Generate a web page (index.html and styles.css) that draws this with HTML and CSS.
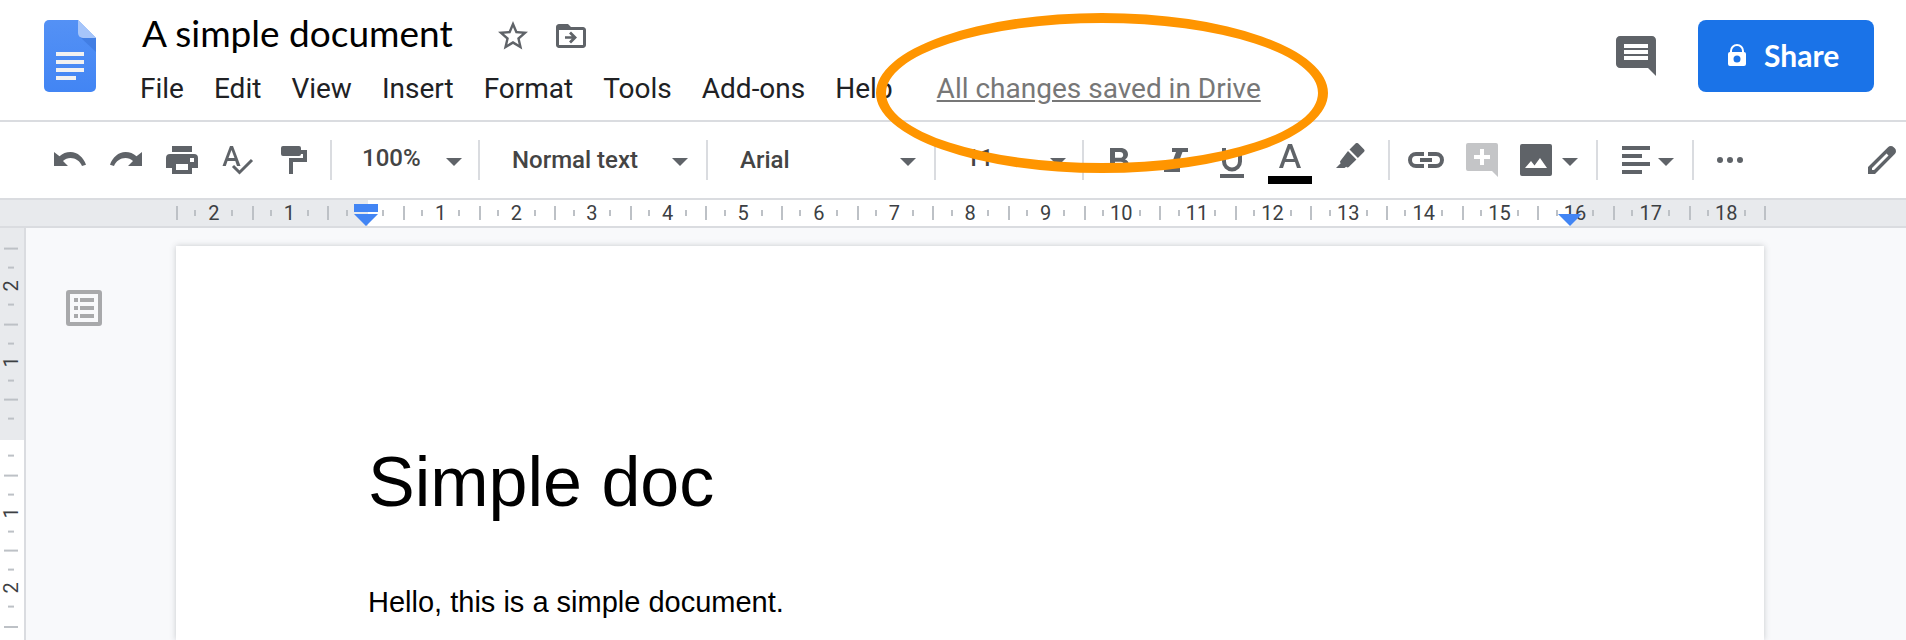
FILE: index.html
```html
<!DOCTYPE html>
<html lang="en">
  <head>
    <meta charset="UTF-8" />
    <meta name="viewport" content="width=device-width, initial-scale=1.0" />
    <title>A simple document</title>
    <link rel="stylesheet" href="styles.css" />
  </head>
  <body>
    <header class="header">
      <a class="logo" href="#" aria-label="Docs home">
        <svg width="52" height="72" viewBox="0 0 52 72">
          <defs>
            <linearGradient id="paper" x1="0" y1="0" x2="0" y2="1">
              <stop offset="0" stop-color="#5491f5" />
              <stop offset="1" stop-color="#4285f4" />
            </linearGradient>
          </defs>
          <path fill="url(#paper)" d="M5 0h29l18 18v49a5 5 0 0 1-5 5H5a5 5 0 0 1-5-5V5a5 5 0 0 1 5-5z" />
          <path fill="#3a74d8" opacity=".6" d="M36 17l16 15V18H38z" />
          <path fill="#a6c5fa" d="M34 0l18 18H39a5 5 0 0 1-5-5z" />
          <path fill="#f1f1f1" d="M12 32h28v4H12zM12 40h28v4H12zM12 48h28v4H12zM12 56h20v4H12z" />
        </svg>
      </a>

      <div class="header-main">
        <div class="title-row">
          <h1 class="doc-name">A simple document</h1>
          <button class="icon-btn" aria-label="Star">
            <svg width="36" height="36" viewBox="0 0 24 24"><path d="M22 9.240l-7.190-.62L12 2 9.190 8.630 2 9.240l5.460 4.730L5.820 21 12 17.270 18.180 21l-1.630-7.030L22 9.240zM12 15.400l-3.760 2.270 1-4.280-3.320-2.880 4.380-.38L12 6.100l1.710 4.040 4.380.38-3.320 2.880 1 4.280L12 15.400z" /></svg>
          </button>
          <button class="icon-btn" aria-label="Move">
            <svg width="36" height="36" viewBox="0 0 24 24"><path d="M20 6h-8l-2-2H4c-1.100 0-2 .9-2 2v12c0 1.100.9 2 2 2h16c1.100 0 2-.9 2-2V8c0-1.100-.9-2-2-2zm0 12H4V8h16v10zM12 17l4-4-4-4-1.300 1.300 1.800 1.800H8v1.800h4.500l-1.800 1.800z" /></svg>
          </button>
        </div>
        <nav class="menu">
          <a href="#">File</a>
          <a href="#">Edit</a>
          <a href="#">View</a>
          <a href="#">Insert</a>
          <a href="#">Format</a>
          <a href="#">Tools</a>
          <a href="#">Add-ons</a>
          <a href="#">Help</a>
          <a class="save-state" href="#">All changes saved in Drive</a>
        </nav>
      </div>

      <button class="icon-btn comments" aria-label="Comments">
        <svg width="48" height="48" viewBox="0 0 24 24"><path d="M21.990 4c0-1.100-.890-2-1.990-2H4c-1.100 0-2 .9-2 2v12c0 1.100.9 2 2 2h14l4 4-.01-18zM18 14H6v-2h12v2zm0-3H6V9h12v2zm0-3H6V6h12v2z" /></svg>
      </button>
      <button class="share">
        <svg width="18" height="24" viewBox="0 0 18 24"><path fill-rule="evenodd" d="M2 9V8a7 7 0 0 1 14 0v1a2 2 0 0 1 2 2v10a2 2 0 0 1-2 2H2a2 2 0 0 1-2-2V11a2 2 0 0 1 2-2zM4 9h10V8A5 5 0 0 0 4 8zM9 12.500a3.500 3.500 0 1 0 0 7 3.500 3.500 0 0 0 0-7z" /></svg>
        Share
      </button>
    </header>

    <div class="toolbar">
      <button class="tool" aria-label="Undo">
        <svg width="32" height="28" viewBox="0 0 32 28"><path d="M16.500 6C12.300 6 8.500 7.600 5.500 10.200L0 6v14h14l-5-5c2-1.700 4.700-2.900 7.500-2.900 5 0 9.600 3.100 11.500 7.900l4-1.300C29.500 11.500 23.600 6 16.500 6z" /></svg>
      </button>
      <button class="tool" aria-label="Redo">
        <svg width="32" height="28" viewBox="0 0 32 28"><path d="M15.500 6c4.200 0 8 1.600 11 4.200L32 6v14H18l5-5c-2-1.700-4.700-2.900-7.500-2.900-5 0-9.600 3.100-11.500 7.900l-4-1.300C2.500 11.500 8.400 6 15.500 6z" /></svg>
      </button>
      <button class="tool" aria-label="Print">
        <svg width="32" height="28" viewBox="0 0 32 28"><path fill-rule="evenodd" d="M6 0h20v6H6zM4 8h24a4 4 0 0 1 4 4v10h-6v6H6v-6H0V12a4 4 0 0 1 4-4zM10 18v6h12v-6zM24 12v4h4v-4z" /></svg>
      </button>
      <button class="tool" aria-label="Spelling check">
        <svg width="32" height="30" viewBox="0 0 32 30"><path fill-rule="evenodd" d="M8 1h3l7.500 20H15l-1.700-5H5.500l-1.700 5H.5zM9.500 5L6.500 13h6z" /><path d="M11 21l6.500 6.500L30 15" fill="none" stroke="#5f6368" stroke-width="3" /></svg>
      </button>
      <button class="tool" aria-label="Paint format">
        <svg width="26" height="28" viewBox="0 0 26 28"><path d="M2 0h16a2 2 0 0 1 2 2v2h6v12H12v12H8V12h14V8h-2a2 2 0 0 1-2 2H2a2 2 0 0 1-2-2V2a2 2 0 0 1 2-2z" /></svg>
      </button>
      <span class="divider"></span>

      <label class="field field-small">
        <select aria-label="Zoom"><option>100%</option></select>
        <svg class="arrow" width="16" height="8" viewBox="0 0 16 8"><path d="M0 0h16L8 8z" /></svg>
      </label>
      <span class="divider"></span>
      <label class="field">
        <select aria-label="Styles"><option>Normal text</option></select>
        <svg class="arrow" width="16" height="8" viewBox="0 0 16 8"><path d="M0 0h16L8 8z" /></svg>
      </label>
      <span class="divider"></span>
      <label class="field">
        <select aria-label="Font"><option>Arial</option></select>
        <svg class="arrow" width="16" height="8" viewBox="0 0 16 8"><path d="M0 0h16L8 8z" /></svg>
      </label>
      <span class="divider"></span>
      <label class="field field-small">
        <select aria-label="Font size"><option>11</option></select>
        <svg class="arrow" width="16" height="8" viewBox="0 0 16 8"><path d="M0 0h16L8 8z" /></svg>
      </label>
      <span class="divider"></span>

      <button class="tool" aria-label="Bold">
        <svg width="20" height="24" viewBox="0 0 20 24"><path fill-rule="evenodd" d="M0 0h10.500C15 0 18 2.600 18 6.400c0 2.300-1.200 4-3 5 2.500.9 4 2.900 4 5.600 0 4.200-3.200 7-8 7H0zM5 4v5.800h5c2 0 3.200-1.100 3.200-2.900S12 4 10 4zM5 13.700V20h5.800c2.100 0 3.300-1.200 3.300-3.100s-1.200-3.200-3.300-3.200z" /></svg>
      </button>
      <button class="tool" aria-label="Italic">
        <svg width="24" height="24" viewBox="0 0 24 24"><path d="M8 0h16v4h-5.500l-6 16H16v4H0v-4h6l6-16H8z" /></svg>
      </button>
      <button class="tool" aria-label="Underline">
        <svg width="24" height="36" viewBox="0 0 24 36"><path d="M0 32h24v4H0zM2 6h4v13.500a6 6 0 0 0 12 0V6h4v13.500a10 10 0 0 1-20 0z" /></svg>
      </button>
      <button class="tool tool-color" aria-label="Text color">
        <svg width="44" height="48" viewBox="0 0 44 48"><path fill-rule="evenodd" d="M20 8h4l9 24h-4l-2-6H17l-2 6h-4zM22 12.500L18.200 23h7.600z" /><path fill="#000" d="M0 40h44v8H0z" /></svg>
      </button>
      <button class="tool tool-color" aria-label="Highlight color">
        <svg width="30" height="34" viewBox="0 0 30 34"><path d="M20.500.6a2 2 0 0 1 2.800 0l5.600 5.600a2 2 0 0 1 0 2.800l-6 6-8.400-8.400zM13 8l8.400 8.400-7.400 7.400a2 2 0 0 1-2.800 0L9.500 25H1l4.700-4.800a2 2 0 0 1 0-2.800z" /></svg>
      </button>
      <span class="divider"></span>

      <button class="tool" aria-label="Insert link">
        <svg width="36" height="16" viewBox="0 0 36 16"><path d="M16 0v4H8a4 4 0 0 0 0 8h8v4H8A8 8 0 0 1 8 0zM20 0h8a8 8 0 0 1 0 16h-8v-4h8a4 4 0 0 0 0-8h-8zM12 6h12v4H12z" /></svg>
      </button>
      <button class="tool" aria-label="Add comment" disabled>
        <svg width="32" height="34" viewBox="0 0 32 34"><path fill-rule="evenodd" d="M2 0h28a2 2 0 0 1 2 2v32l-6-6H2a2 2 0 0 1-2-2V2a2 2 0 0 1 2-2zM14 6v6H8v4h6v6h4v-6h6v-4h-6V6z" /></svg>
      </button>
      <button class="tool tool-menu" aria-label="Insert image">
        <svg width="32" height="32" viewBox="0 0 32 32"><path fill-rule="evenodd" d="M2 0h28a2 2 0 0 1 2 2v28a2 2 0 0 1-2 2H2a2 2 0 0 1-2-2V2a2 2 0 0 1 2-2zM5 24h22l-7-10-5.500 7.500L11 17z" /></svg>
        <svg class="arrow" width="16" height="8" viewBox="0 0 16 8"><path d="M0 0h16L8 8z" /></svg>
      </button>
      <span class="divider"></span>

      <button class="tool tool-menu tool-align" aria-label="Align">
        <svg width="28" height="28" viewBox="0 0 28 28"><path d="M0 0h28v4H0zM0 8h20v4H0zM0 16h28v4H0zM0 24h20v4H0z" /></svg>
        <svg class="arrow" width="16" height="8" viewBox="0 0 16 8"><path d="M0 0h16L8 8z" /></svg>
      </button>
      <span class="divider"></span>

      <button class="tool" aria-label="More">
        <svg width="26" height="6" viewBox="0 0 26 6"><circle cx="3" cy="3" r="3" /><circle cx="13" cy="3" r="3" /><circle cx="23" cy="3" r="3" /></svg>
      </button>
      <button class="tool tool-mode" aria-label="Editing mode">
        <svg width="28" height="28" viewBox="0 0 28 28"><path fill-rule="evenodd" d="M0 28v-7L20 1.200a4 4 0 0 1 5.700 0l1.100 1.100a4 4 0 0 1 0 5.700L7 28zM4 24h2L20.500 9.500l-2-2L4 22z" /></svg>
      </button>
    </div>

    <div class="ruler">
      <div class="ruler-scale">
        <span>2</span><span>1</span><span></span><span>1</span><span>2</span><span>3</span><span>4</span>
        <span>5</span><span>6</span><span>7</span><span>8</span><span>9</span><span>10</span><span>11</span>
        <span>12</span><span>13</span><span>14</span><span>15</span><span>16</span><span>17</span><span>18</span>
        <svg class="marker marker-left" width="24" height="22" viewBox="0 0 24 22"><path d="M0 0h24v8H0zM0 10h24L12 22z" /></svg>
        <svg class="marker marker-right" width="24" height="22" viewBox="0 0 24 22"><path d="M0 10h24L12 22z" /></svg>
      </div>
    </div>

    <div class="workspace">
      <div class="side-ruler">
        <div class="side-scale">
          <span>2</span><span>1</span><span></span><span>1</span><span>2</span>
        </div>
      </div>
      <aside class="outline">
        <button class="icon-btn outline-btn" aria-label="Show outline">
          <svg width="36" height="36" viewBox="0 0 36 36"><path fill-rule="evenodd" d="M3 0h30a3 3 0 0 1 3 3v30a3 3 0 0 1-3 3H3a3 3 0 0 1-3-3V3a3 3 0 0 1 3-3zM4 4v28h28V4zM8 8h4v4H8zM14 8h14v4H14zM8 16h4v4H8zM14 16h14v4H14zM8 24h4v4H8zM14 24h14v4H14z" /></svg>
        </button>
      </aside>
      <main class="page">
        <h2>Simple doc</h2>
        <p>Hello, this is a simple document.</p>
      </main>
    </div>

    <div class="callout"></div>
  </body>
</html>
```
FILE: styles.css
```css
* {
  box-sizing: border-box;
}

body {
  margin: 0;
  height: 100vh;
  display: flex;
  flex-direction: column;
  overflow: hidden;
  background-color: #fff;
  font-family: Roboto, "Liberation Sans", sans-serif;
  color: #202124;
}

a {
  color: inherit;
  text-decoration: none;
}

button {
  border: 0;
  padding: 0;
  background: none;
  font: inherit;
}

svg {
  display: block;
  fill: #5f6368;
}

/* header */
.header {
  flex: none;
  display: flex;
  align-items: flex-start;
  height: 122px;
  padding: 0 32px 0 44px;
  border-bottom: 2px solid #dadce0;
}

.logo {
  margin-top: 20px;
}

.header-main {
  flex: 1;
  padding: 12px 0 0 44px;
}

.title-row {
  display: flex;
  align-items: center;
  height: 48px;
  gap: 22px;
}

.doc-name {
  margin: 0 20px 0 2px;
  padding-bottom: 6px;
  font-family: Lato, sans-serif;
  font-size: 37px;
  font-weight: 400;
  line-height: 48px;
  color: #000;
}

.menu {
  display: flex;
  gap: 30px;
  font-size: 28px;
  line-height: 58px;
  white-space: nowrap;
}

.save-state {
  margin-left: 14px;
  color: #777;
  text-decoration: underline;
}

.comments {
  margin: 32px 38px 0 0;
}

.share {
  display: flex;
  align-items: center;
  gap: 18px;
  width: 176px;
  height: 72px;
  margin-top: 20px;
  padding: 0 0 2px 30px;
  border-radius: 8px;
  background-color: #1a73e8;
  font-family: Lato, sans-serif;
  font-size: 30px;
  font-weight: 700;
  color: #fff;
}

.share svg {
  fill: #fff;
}

/* toolbar */
.toolbar {
  flex: none;
  display: flex;
  align-items: center;
  height: 78px;
  padding-left: 42px;
  border-bottom: 2px solid #dadce0;
}

.tool {
  flex: none;
  display: flex;
  align-items: center;
  justify-content: center;
  width: 56px;
  height: 56px;
}

.tool-color {
  width: 60px;
}

.tool-menu {
  width: 78px;
  gap: 10px;
}

.tool-align {
  gap: 8px;
  padding-left: 6px;
}

.tool-mode {
  width: 48px;
  margin-left: auto;
}

.tool:disabled svg {
  fill: #c4c5c7;
}

.divider {
  flex: none;
  width: 2px;
  height: 40px;
  margin: 0 8px;
  background-color: #dadce0;
}

.field {
  flex: none;
  display: flex;
  align-items: center;
  width: 210px;
  padding: 0 10px 0 24px;
}

.field-small {
  width: 130px;
  padding: 0 8px 0 22px;
}

.field select {
  flex: 1;
  min-width: 0;
  height: 40px;
  padding: 0;
  border: 0;
  appearance: none;
  background: none;
  font-family: inherit;
  font-size: 24px;
  font-weight: 500;
  color: #444;
}

.field-small select {
  padding-bottom: 4px;
}

.arrow {
  flex: none;
  margin-top: 4px;
}

/* rulers */
.ruler {
  flex: none;
  height: 28px;
  padding-left: 176px;
  border-bottom: 2px solid #dadce0;
  background-color: #e8eaed;
}

.ruler-scale {
  position: relative;
  display: flex;
  max-width: 1590px;
  height: 26px;
  padding-right: 2px;
  background:
    linear-gradient(#bdc1c6, #bdc1c6) right / 2px 14px no-repeat,
    linear-gradient(to right, transparent 192px, #fff 192px, #fff calc(100% - 196px), transparent calc(100% - 196px));
}

.ruler-scale span {
  flex: 1;
  font-size: 20px;
  line-height: 27px;
  text-align: center;
  color: #3c4043;
  background:
    linear-gradient(#bdc1c6, #bdc1c6) left / 2px 14px no-repeat,
    linear-gradient(#bdc1c6, #bdc1c6) 25% / 2px 6px no-repeat,
    linear-gradient(#bdc1c6, #bdc1c6) 75% / 2px 6px no-repeat;
}

.marker {
  position: absolute;
  top: 4px;
  fill: #4285f4;
}

.marker-left {
  left: 178px;
}

.marker-right {
  right: 184px;
}

.workspace {
  flex: 1;
  min-height: 0;
  display: flex;
  background-color: #f8f9fb;
}

.side-ruler {
  flex: none;
  width: 26px;
  padding: 20px 2px 0 0;
  border-right: 2px solid #dadce0;
  background: linear-gradient(#e8eaed 212px, #fff 212px);
}

.side-scale {
  display: grid;
  grid-template-rows: repeat(5, 1fr);
  height: 380px;
  padding-bottom: 2px;
  background: linear-gradient(#bdc1c6, #bdc1c6) 4px 100% / 14px 2px no-repeat;
}

.side-scale span {
  width: 22px;
  writing-mode: vertical-rl;
  transform: rotate(180deg);
  font-size: 20px;
  line-height: 22px;
  text-align: center;
  color: #3c4043;
  background:
    linear-gradient(#bdc1c6, #bdc1c6) bottom / 14px 2px no-repeat,
    linear-gradient(#bdc1c6, #bdc1c6) 50% 25% / 6px 2px no-repeat,
    linear-gradient(#bdc1c6, #bdc1c6) 50% 75% / 6px 2px no-repeat;
}

/* document */
.outline {
  flex: none;
  width: 150px;
  padding: 62px 0 0 40px;
}

.outline-btn svg {
  fill: #a8a9ab;
}

.page {
  flex: 1;
  max-width: 1588px;
  margin-top: 18px;
  padding: 190px 192px 0;
  background-color: #fff;
  box-shadow: 0 0 6px rgba(60, 64, 67, 0.25);
  font-family: "Liberation Sans", Arial, sans-serif;
  color: #000;
}

.page h2 {
  margin: 0 0 54px;
  font-size: 70px;
  font-weight: 400;
  line-height: 92px;
}

.page p {
  margin: 0;
  font-size: 29px;
  line-height: 40px;
}

/* highlight ring over the save status */
.callout {
  position: absolute;
  top: 13px;
  left: 876px;
  width: 452px;
  height: 160px;
  border: 10px solid #ff9500;
  border-radius: 50%;
  pointer-events: none;
}
```
